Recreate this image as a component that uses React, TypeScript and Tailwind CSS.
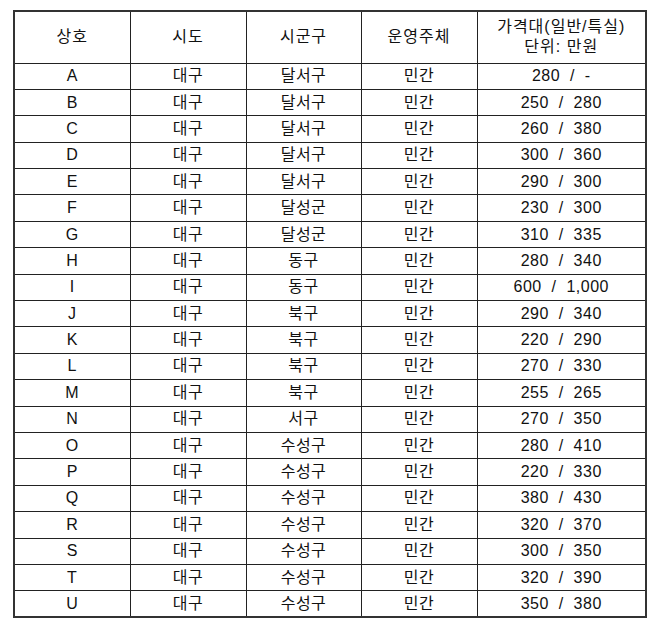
import React from "react";

const rows: [string, string, string, string, string][] = [
  ["A", "대구", "달서구", "민간", "280 / -"],
  ["B", "대구", "달서구", "민간", "250 / 280"],
  ["C", "대구", "달서구", "민간", "260 / 380"],
  ["D", "대구", "달서구", "민간", "300 / 360"],
  ["E", "대구", "달서구", "민간", "290 / 300"],
  ["F", "대구", "달성군", "민간", "230 / 300"],
  ["G", "대구", "달성군", "민간", "310 / 335"],
  ["H", "대구", "동구", "민간", "280 / 340"],
  ["I", "대구", "동구", "민간", "600 / 1,000"],
  ["J", "대구", "북구", "민간", "290 / 340"],
  ["K", "대구", "북구", "민간", "220 / 290"],
  ["L", "대구", "북구", "민간", "270 / 330"],
  ["M", "대구", "북구", "민간", "255 / 265"],
  ["N", "대구", "서구", "민간", "270 / 350"],
  ["O", "대구", "수성구", "민간", "280 / 410"],
  ["P", "대구", "수성구", "민간", "220 / 330"],
  ["Q", "대구", "수성구", "민간", "380 / 430"],
  ["R", "대구", "수성구", "민간", "320 / 370"],
  ["S", "대구", "수성구", "민간", "300 / 350"],
  ["T", "대구", "수성구", "민간", "320 / 390"],
  ["U", "대구", "수성구", "민간", "350 / 380"],
];

const cell = "border border-[#222] text-center align-middle p-0";

export default function App() {
  return (
    <div
      className="w-[658px] h-[629px] bg-white pt-[10px] pl-[13px]"
      style={{ fontFamily: '"Liberation Sans", "Noto Sans CJK KR", sans-serif' }}
    >
      <table className="border-collapse border-2 border-[#333] text-[16px] text-[#111] table-fixed w-[632px]">
        <colgroup>
          <col className="w-[116px]" />
          <col className="w-[116px]" />
          <col className="w-[115px]" />
          <col className="w-[116px]" />
          <col className="w-[169px]" />
        </colgroup>
        <thead>
          <tr className="h-[52px]">
            <th className={cell + " font-normal tracking-[1px]"}>상호</th>
            <th className={cell + " font-normal tracking-[1px]"}>시도</th>
            <th className={cell + " font-normal tracking-[1px]"}>시군구</th>
            <th className={cell + " font-normal tracking-[1px]"}>운영주체</th>
            <th className={cell + " font-normal leading-[20px] tracking-[1px]"}>
              가격대(일반/특실)
              <br />
              단위: 만원
            </th>
          </tr>
        </thead>
        <tbody>
          {rows.map((r) => (
            <tr key={r[0]} className="h-[26.4px]">
              {r.map((c, i) => (
                <td
                  key={i}
                  className={cell + " leading-[18px] whitespace-pre tracking-[0.5px]"}
                >
                  {i === 4 ? c.replace(/ \/ /g, "  /  ") : c}
                </td>
              ))}
            </tr>
          ))}
        </tbody>
      </table>
    </div>
  );
}
